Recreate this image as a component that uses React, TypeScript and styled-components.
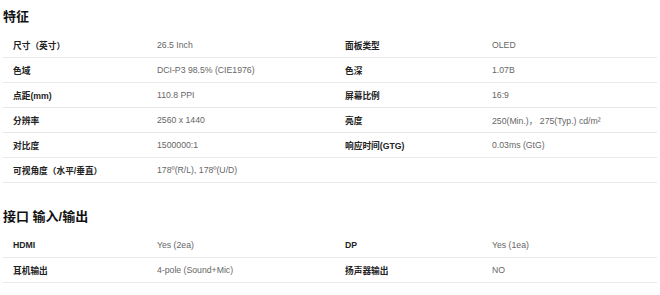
import styled, { createGlobalStyle } from "styled-components";

type Spec = [string, string];

const features: [Spec, Spec | null][] = [
  [["尺寸（英寸）", "26.5 Inch"], ["面板类型", "OLED"]],
  [["色域", "DCI-P3 98.5% (CIE1976)"], ["色深", "1.07B"]],
  [["点距(mm)", "110.8 PPI"], ["屏幕比例", "16:9"]],
  [["分辨率", "2560 x 1440"], ["亮度", "250(Min.)， 275(Typ.) cd/m²"]],
  [["对比度", "1500000:1"], ["响应时间(GTG)", "0.03ms (GtG)"]],
  [["可视角度（水平/垂直）", "178º(R/L), 178º(U/D)"], null],
];

const ports: [Spec, Spec | null][] = [
  [["HDMI", "Yes (2ea)"], ["DP", "Yes (1ea)"]],
  [["耳机输出", "4-pole (Sound+Mic)"], ["扬声器输出", "NO"]],
];

function SpecTable({ rows }: { rows: [Spec, Spec | null][] }) {
  return (
    <Table>
      {rows.map(([left, right], i) => (
        <Row key={i}>
          <Label>{left[0]}</Label>
          <Value>{left[1]}</Value>
          <Label>{right ? right[0] : ""}</Label>
          <Value>{right ? right[1] : ""}</Value>
        </Row>
      ))}
    </Table>
  );
}

function App() {
  return (
    <>
      <GlobalStyle />
      <Page>
        <Section>
          <Title>特征</Title>
          <SpecTable rows={features} />
        </Section>
        <Section>
          <Title>接口 输入/输出</Title>
          <SpecTable rows={ports} />
        </Section>
      </Page>
    </>
  );
}

const GlobalStyle = createGlobalStyle`
  body {
    margin: 0;
    background: #fff;
    font-family: "Liberation Sans", "Noto Sans CJK SC", sans-serif;
  }
`;

const Page = styled.div`
  display: flex;
  flex-direction: column;
  gap: 17px;
  padding: 0 3px;
`;

const Section = styled.section`
  display: flex;
  flex-direction: column;
`;

const Title = styled.h2`
  margin: 0;
  padding: 8px 0 7px;
  font-size: 13px;
  line-height: 18px;
  font-weight: 700;
  color: #111;
`;

const Table = styled.div`
  display: flex;
  flex-direction: column;
`;

const Row = styled.div`
  display: grid;
  grid-template-columns: 154px 178px 157px 1fr;
  align-items: center;
  height: 24px;
  border-bottom: 1px solid #e9e9e9;
  font-size: 8.7px;
`;

const Label = styled.div`
  padding-left: 10px;
  font-weight: 700;
  color: #222;
  white-space: nowrap;
`;

const Value = styled.div`
  color: #666;
  white-space: nowrap;
`;

export default App;
